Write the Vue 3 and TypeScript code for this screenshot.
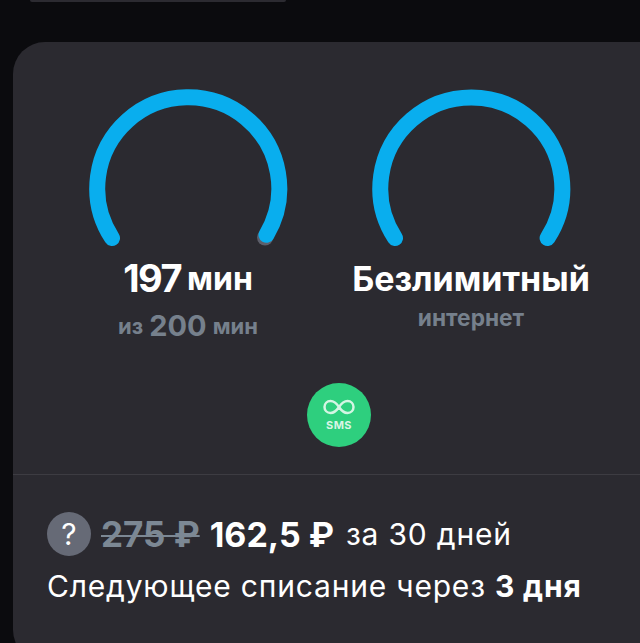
<script setup lang="ts">
/** Тариф: два индикатора остатка и блок со стоимостью */
interface Gauge {
  id: string
  arc: string
  worn: boolean
}

const gauges: Gauge[] = [
  { id: 'minutes', arc: 'M 112 238 A 91 91 0 1 1 266.5 234.8', worn: true },
  { id: 'internet', arc: 'M 112 238 A 91 91 0 1 1 264.6 238', worn: false }
]
</script>

<template>
  <div class="page">
    <div class="top-pill"></div>
    <section class="card">
      <div class="gauges">
        <div v-for="g in gauges" :key="g.id" class="gauge">
          <svg class="arc" width="216" height="172" viewBox="80 80 216 172">
            <circle v-if="g.worn" cx="265" cy="237.500" r="8" fill="#5c5f6b" />
            <path :d="g.arc" fill="none" stroke="#09aeee" stroke-width="16" stroke-linecap="round" />
          </svg>
          <template v-if="g.id === 'minutes'">
            <div class="value"><span class="big">197</span><span class="unit">мин</span></div>
            <div class="sub"><span>из</span><span class="sub-big">200</span><span>мин</span></div>
          </template>
          <template v-else>
            <div class="value"><span class="title">Безлимитный</span></div>
            <div class="sub sub-net">интернет</div>
          </template>
        </div>
      </div>

      <div class="badge-row">
        <div class="badge">
          <svg width="32" height="16" viewBox="0 0 32 16">
            <path d="M16 8 C13 3.500 10.500 2 7.500 2 C4 2 1.500 4.700 1.500 8 C1.500 11.300 4 14 7.500 14 C10.500 14 13 12.500 16 8 C19 3.500 21.500 2 24.500 2 C28 2 30.500 4.700 30.500 8 C30.500 11.300 28 14 24.500 14 C21.500 14 19 12.500 16 8 Z" fill="none" stroke="#d4f5e3" stroke-width="2.500" />
          </svg>
          <span class="sms">SMS</span>
        </div>
      </div>

      <div class="price">
        <div class="price-line">
          <span class="help">?</span>
          <span class="old">275 ₽</span>
          <span class="now">162,5 ₽</span>
          <span class="period">за 30 дней</span>
        </div>
        <div class="next">Следующее списание через <b>3 дня</b></div>
      </div>
    </section>
  </div>
</template>

<style>
html, body { background: #0b0b0e; }
</style>

<style scoped>
.page {
  width: 640px;
  height: 643px;
  overflow: hidden;
  background: #0b0b0e;
  font-family: Inter, "Liberation Sans", sans-serif;
  color: #fff;
}
.top-pill {
  width: 256px;
  height: 2px;
  margin-left: 30px;
  background: #2c2b31;
  border-radius: 0 0 10px 10px;
}
.card {
  width: 660px;
  height: 620px;
  margin: 40px 0 0 13px;
  background: #2b2a30;
  border-radius: 32px;
}
.gauges {
  display: flex;
  padding: 38px 0 0 67px;
  gap: 67px;
}
.gauge {
  width: 216px;
  display: flex;
  flex-direction: column;
  align-items: center;
}
.arc { display: block; }
.value {
  height: 44px;
  margin-top: 4px;
  display: flex;
  align-items: center;
  gap: 6px;
  font-weight: 700;
}
.big { font-size: 38px; letter-spacing: -1.5px; }
.unit { font-size: 32px; }
.title { font-size: 34px; white-space: nowrap; }
.sub {
  display: flex;
  align-items: center;
  gap: 6px;
  margin-top: 8px;
  color: #76808c;
  font-size: 22px;
  font-weight: 700;
}
.sub-big { font-size: 29px; }
.sub-net { font-size: 22.700px; margin-top: 4px; }
.badge-row {
  display: flex;
  justify-content: center;
  margin: 40px 0 0 0;
  padding-right: 8px;
}
.badge {
  width: 64px;
  height: 64px;
  border-radius: 50%;
  background: #2ecf7e;
  display: flex;
  flex-direction: column;
  align-items: center;
  justify-content: center;
  gap: 3px;
}
.sms { font-size: 11px; font-weight: 700; color: #d8f5e5; letter-spacing: 0.4px; }
.price {
  margin-top: 27px;
  padding: 37px 0 0 34px;
  border-top: 1px solid #3d3c42;
}
.price-line {
  display: flex;
  align-items: center;
  gap: 10px;
}
.help {
  width: 44px;
  height: 44px;
  border-radius: 50%;
  background: #666a76;
  display: flex;
  align-items: center;
  justify-content: center;
  font-size: 30px;
}
.old {
  font-size: 35px;
  font-weight: 700;
  color: #7c8894;
  text-decoration: line-through;
  text-decoration-thickness: 2px;
}
.now { font-size: 34px; font-weight: 700; }
.period { font-size: 30px; letter-spacing: 0.8px; margin-left: 2px; }
.next { margin-top: 12px; font-size: 30px; letter-spacing: 0.8px; white-space: nowrap; }
.next b { font-weight: 700; }
</style>
